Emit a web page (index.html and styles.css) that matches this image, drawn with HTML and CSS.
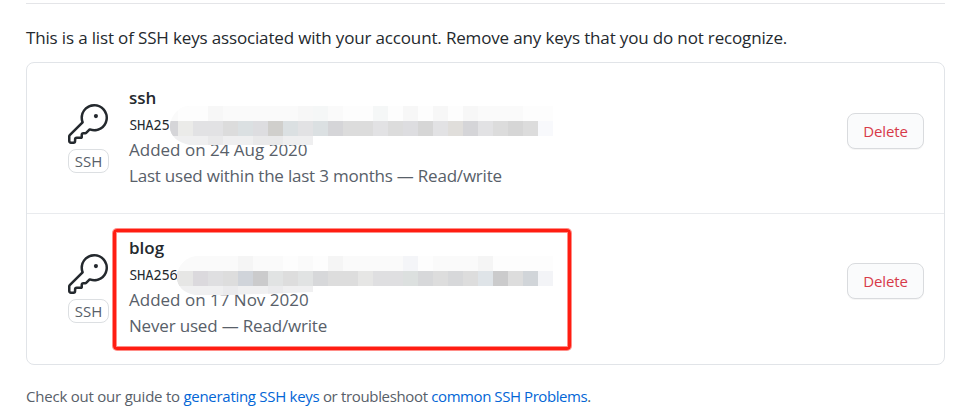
FILE: index.html
```
<!DOCTYPE html>
<html lang="en">
<head>
<meta charset="utf-8">
<title>SSH keys</title>
<link rel="stylesheet" href="styles.css">
</head>
<body>
<main class="page">
  <p class="intro"><span class="t-intro">This is a list of SSH keys associated with your account. Remove any keys that you do not recognize.</span></p>
  <ul class="keys">
    <li class="key">
      <div class="kind">
        <svg class="key-icon" viewBox="0 0 24 24"><path d="M16.75 8.5a1.25 1.25 0 1 0 0-2.5 1.25 1.25 0 0 0 0 2.5z"/><path fill-rule="evenodd" d="M15.75 0a8.25 8.25 0 0 0-7.851 10.79L.513 18.178A1.75 1.75 0 0 0 0 19.414v2.836C0 23.217.784 24 1.75 24h1.5A1.75 1.75 0 0 0 5 22.25v-1a.25.25 0 0 1 .25-.25h2.735a.75.75 0 0 0 .545-.22l.214-.213A.875.875 0 0 0 9 19.948V18.5a.25.25 0 0 1 .25-.25h1.086c.464 0 .91-.184 1.237-.513l1.636-1.636A8.25 8.25 0 1 0 15.75 0zM9 8.25a6.75 6.75 0 1 1 4.288 6.287.75.75 0 0 0-.804.168l-1.971 1.972a.25.25 0 0 1-.177.073H9.25A1.75 1.75 0 0 0 7.5 18.5v1H5.25a1.75 1.75 0 0 0-1.75 1.75v1a.25.25 0 0 1-.25.25h-1.5a.25.25 0 0 1-.25-.25v-2.836a.25.25 0 0 1 .073-.177l7.722-7.721a.75.75 0 0 0 .168-.804A6.73 6.73 0 0 1 9 8.25z"/></svg>
        <span class="tag">SSH</span>
      </div>
      <div class="info">
        <strong class="name">ssh</strong>
        <code class="hash">SHA25</code>
        <span class="meta t-added">Added on 24 Aug 2020</span>
        <span class="meta t-last">Last used within the last 3 months — Read/write</span>
        <svg class="mask" viewBox="168 106 385 40" shape-rendering="crispEdges">
          <clipPath id="c1"><path d="M190 106H553V136H313V145H205L190 145C178 143 170 136 170 127C170 117 178 106 190 106Z"/></clipPath>
          <g clip-path="url(#c1)" fill="none" stroke-width="15">
            <path stroke="#fafafa" d="M168 113.500H553"/>
            <path stroke="#f7f7f7" d="M208 113.500h15M298 113.500h15M403 113.500h15M433 113.500h15M463 113.500h15"/>
            <path stroke="#f5f7f7" d="M313 113.500h15M373 113.500h15"/>
            <path stroke="#fdfdfd" d="M178 113.500h30M343 113.500h30M388 113.500h15M418 113.500h15M448 113.500h15M523 113.500h30"/>
            <path stroke="#dcdcdc" d="M168 128.500H538"/>
            <path stroke="#d5d5d8" d="M168 128.500h10M328 128.500h15M463 128.500h15"/>
            <path stroke="#ebebe9" d="M178 128.500h15"/>
            <path stroke="#e2e2e4" d="M193 128.500h30M298 128.500h15M373 128.500h15M433 128.500h15M478 128.500h15"/>
            <path stroke="#dbe0e2" d="M238 128.500h15M283 128.500h15M313 128.500h15"/>
            <path stroke="#d0cfcc" d="M268 128.500h15"/>
            <path stroke="#dddde0" d="M253 128.500h15M403 128.500h15"/>
            <path stroke="#d6d6d6" d="M418 128.500h15M508 128.500h15"/>
            <path stroke="#e0dedb" d="M448 128.500h15"/>
            <path stroke="#f8f9fc" d="M538 128.500h15"/>
            <path stroke="#efeff0" d="M168 143.500H313"/>
            <path stroke="#e9e9ea" d="M208 143.500h15M253 143.500h30"/>
          </g>
        </svg>
      </div>
      <button class="delete"><span class="t-del">Delete</span></button>
    </li>
    <li class="key">
      <div class="kind">
        <svg class="key-icon" viewBox="0 0 24 24"><path d="M16.75 8.5a1.25 1.25 0 1 0 0-2.5 1.25 1.25 0 0 0 0 2.5z"/><path fill-rule="evenodd" d="M15.75 0a8.25 8.25 0 0 0-7.851 10.79L.513 18.178A1.75 1.75 0 0 0 0 19.414v2.836C0 23.217.784 24 1.75 24h1.5A1.75 1.75 0 0 0 5 22.25v-1a.25.25 0 0 1 .25-.25h2.735a.75.75 0 0 0 .545-.22l.214-.213A.875.875 0 0 0 9 19.948V18.5a.25.25 0 0 1 .25-.25h1.086c.464 0 .91-.184 1.237-.513l1.636-1.636A8.25 8.25 0 1 0 15.75 0zM9 8.25a6.75 6.75 0 1 1 4.288 6.287.75.75 0 0 0-.804.168l-1.971 1.972a.25.25 0 0 1-.177.073H9.25A1.75 1.75 0 0 0 7.5 18.5v1H5.25a1.75 1.75 0 0 0-1.75 1.75v1a.25.25 0 0 1-.25.25h-1.5a.25.25 0 0 1-.25-.25v-2.836a.25.25 0 0 1 .073-.177l7.722-7.721a.75.75 0 0 0 .168-.804A6.73 6.73 0 0 1 9 8.25z"/></svg>
        <span class="tag">SSH</span>
      </div>
      <div class="info">
        <strong class="name">blog</strong>
        <code class="hash">SHA256</code>
        <span class="meta t-added">Added on 17 Nov 2020</span>
        <span class="meta t-never">Never used — Read/write</span>
        <svg class="mask" viewBox="168 256 385 40" shape-rendering="crispEdges">
          <clipPath id="c2"><path d="M198 256H553V286H313V292L230 295H195C183 293 177 286 177 277C177 266 186 256 198 256Z"/></clipPath>
          <g clip-path="url(#c2)" fill="none" stroke-width="15">
            <path stroke="#fafafa" d="M168 263.500H553"/>
            <path stroke="#f5f5f5" d="M238 263.500h15M328 263.500h15M478 263.500h15"/>
            <path stroke="#f4f5f8" d="M403 263.500h15"/>
            <path stroke="#fdfdfd" d="M283 263.500h15M313 263.500h15M418 263.500h15M493 263.500h60"/>
            <path stroke="#dddddd" d="M168 278.500H538"/>
            <path stroke="#e6e6e5" d="M168 278.500h25M358 278.500h15"/>
            <path stroke="#dbd9dd" d="M193 278.500h15"/>
            <path stroke="#dfdfe1" d="M208 278.500h15M373 278.500h30"/>
            <path stroke="#d0d4da" d="M238 278.500h15"/>
            <path stroke="#cbcbcc" d="M253 278.500h15M493 278.500h15"/>
            <path stroke="#e1e3e3" d="M268 278.500h15M298 278.500h15"/>
            <path stroke="#dce0df" d="M403 278.500h15"/>
            <path stroke="#d7d8da" d="M313 278.500h15M418 278.500h15M448 278.500h15"/>
            <path stroke="#dfe4e8" d="M478 278.500h15"/>
            <path stroke="#d1d5d9" d="M523 278.500h15"/>
            <path stroke="#f3f4f7" d="M538 278.500h15"/>
            <path stroke="#f0f0f1" d="M168 293.500H313"/>
            <path stroke="#ebebed" d="M223 293.500h15M268 293.500h15"/>
          </g>
        </svg>
        <div class="highlight"></div>
      </div>
      <button class="delete"><span class="t-del">Delete</span></button>
    </li>
  </ul>
  <p class="guide"><span class="t-guide">Check out our guide to</span> <a class="t-gen">generating SSH keys</a> or troubleshoot <a class="t-common">common SSH Problems</a>.</p>
</main>
</body>
</html>
```
FILE: styles.css
```
* { box-sizing: border-box; }
body {
  margin: 0;
  background: #fff;
  color: #24292e;
  font-family: "Open Sans", "Noto Sans", sans-serif;
  font-size: 17px;
  line-height: 26px;
}
.page { margin: 3px 13px 0 26px; border-top: 1px solid #e4e5e8; }
p { margin: 0; white-space: nowrap; }
.intro { padding-top: 21px; height: 58px; }
.t-intro { letter-spacing: -0.155px; }
.keys {
  margin: 0;
  padding: 0;
  list-style: none;
  height: 303px;
  border: 1px solid #e1e4e8;
  border-radius: 8px;
}
.key {
  display: flex;
  height: 150px;
  padding: 22px 20px 0 41px;
}
.key + .key { border-top: 1px solid #e9ebee; height: 151px; padding-top: 21px; }
.kind { width: 42px; padding-top: 19px; }
.key-icon { display: block; width: 40px; height: 40px; fill: #24292e; }
.tag {
  display: block;
  width: 41px;
  height: 24px;
  margin-top: 5px;
  border: 1px solid #dcdfe2;
  border-radius: 8px;
  color: #586069;
  font-size: 15px;
  line-height: 23px;
  text-align: center;
}
.info { position: relative; flex: 1; margin-left: 19px; }
.info > strong, .info > code, .info > span { display: block; white-space: nowrap; }
.name { font-weight: 600; line-height: 26px; }
.hash {
  height: 26px;
  font-family: "Noto Sans Mono", "DejaVu Sans Mono", monospace;
  font-size: 14px;
  line-height: 28px;
  letter-spacing: -0.3px;
}
.meta { color: #586069; }
.t-last { letter-spacing: -0.21px; }
.t-never { letter-spacing: -0.18px; }
.mask { position: absolute; left: 39px; top: 21px; width: 385px; height: 40px; }
.highlight {
  position: absolute;
  left: -16px;
  top: -6px;
  width: 458px;
  height: 121px;
  border: 3px solid #ff1d12;
  border-radius: 4px;
  box-shadow: 0 0 0 1px rgba(255, 29, 18, 0.5), inset 0 0 0 1px rgba(255, 29, 18, 0.5);
}
.delete {
  width: 77px;
  height: 36px;
  margin-top: 28px;
  padding: 0;
  border: 1px solid #d9dbde;
  border-radius: 8px;
  background: #fafbfc;
  box-shadow: 0 1px 0 rgba(27, 31, 35, 0.04);
  color: #d73a49;
  font: 500 15px/33px "Open Sans", sans-serif;
  letter-spacing: -0.15px;
}
.guide { margin-top: 18px; color: #586069; font-size: 15px; letter-spacing: -0.34px; }
.t-guide { letter-spacing: -0.22px; }
.t-gen { letter-spacing: -0.29px; }
.t-common { letter-spacing: -0.43px; }
.guide a { color: #0366d6; }
```
